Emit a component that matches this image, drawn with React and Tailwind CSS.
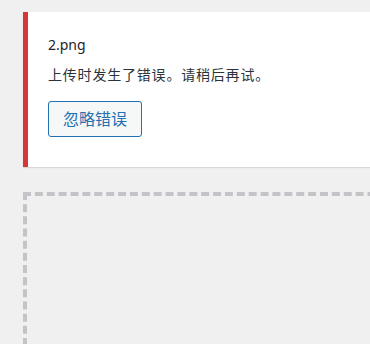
export default function App() {
  return (
    <div
      className="h-[344px] w-[370px] overflow-hidden bg-[#f0f0f1] pl-[23px] pt-[12px] text-[#1d2327]"
      style={{ fontFamily: '"Noto Sans", "Noto Sans CJK SC", sans-serif' }}
    >
      <div className="w-[400px] border-l-[5px] border-[#d63638] bg-white pb-[30px] pl-[20px] pt-[22px] shadow-[0_1px_1px_rgba(0,0,0,0.1)]">
        <div className="text-[14px] leading-[21px]">2.png</div>
        <p className="mt-[9px] text-[14px] leading-[21px] tracking-[0.8px] text-[#2c3338]">
          上传时发生了错误。请稍后再试。
        </p>
        <button
          type="button"
          className="mt-[16px] h-[36px] rounded-[3px] border border-[#2271b1] bg-[#f6f7f7] px-[14px] text-[16px] leading-none text-[#2271b1]"
        >
          忽略错误
        </button>
      </div>
      <div className="mt-[25px] h-[300px] w-[400px] border-4 border-dashed border-[#c3c4c7]" />
    </div>
  );
}
